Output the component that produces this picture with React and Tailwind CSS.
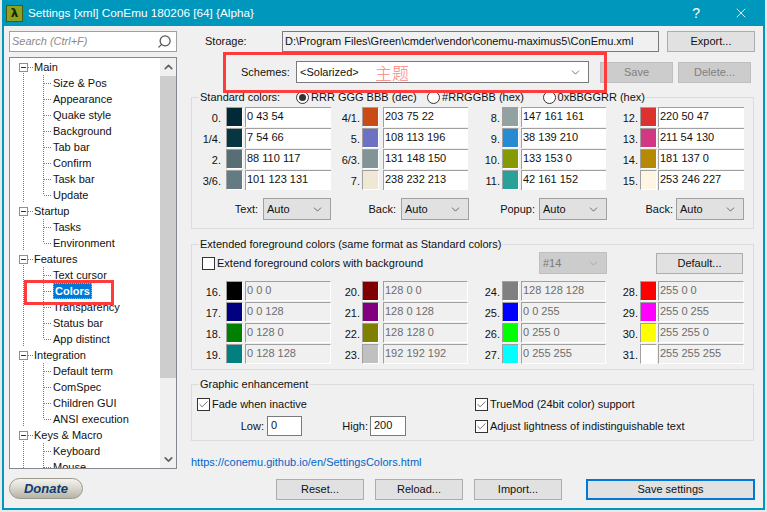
import React from "react";
import { ChevronDown, ChevronUp, Check, Search, X } from "lucide-react";

const TREE = [
  ["Main", 0, false], ["Size & Pos", 1, false], ["Appearance", 1, false], ["Quake style", 1, false],
  ["Background", 1, false], ["Tab bar", 1, false], ["Confirm", 1, false], ["Task bar", 1, false], ["Update", 1, true],
  ["Startup", 0, false], ["Tasks", 1, false], ["Environment", 1, true],
  ["Features", 0, false], ["Text cursor", 1, false], ["Colors", 1, false], ["Transparency", 1, false],
  ["Status bar", 1, false], ["App distinct", 1, true],
  ["Integration", 0, false], ["Default term", 1, false], ["ComSpec", 1, false], ["Children GUI", 1, false], ["ANSI execution", 1, true],
  ["Keys & Macro", 0, false], ["Keyboard", 1, false], ["Mouse", 1, false],
];

const STANDARD = [
  [
    ["0.", "#002b36", "0 43 54"], ["1/4.", "#073642", "7 54 66"],
    ["2.", "#586e75", "88 110 117"], ["3/6.", "#657b83", "101 123 131"],
  ],
  [
    ["4/1.", "#cb4b16", "203 75 22"], ["5.", "#6c71c4", "108 113 196"],
    ["6/3.", "#839496", "131 148 150"], ["7.", "#eee8d5", "238 232 213"],
  ],
  [
    ["8.", "#93a1a1", "147 161 161"], ["9.", "#268bd2", "38 139 210"],
    ["10.", "#859900", "133 153 0"], ["11.", "#2aa198", "42 161 152"],
  ],
  [
    ["12.", "#dc322f", "220 50 47"], ["13.", "#d33682", "211 54 130"],
    ["14.", "#b58900", "181 137 0"], ["15.", "#fdf6e3", "253 246 227"],
  ],
];

const EXTENDED = [
  [
    ["16.", "#000000", "0 0 0"], ["17.", "#000080", "0 0 128"],
    ["18.", "#008000", "0 128 0"], ["19.", "#008080", "0 128 128"],
  ],
  [
    ["20.", "#800000", "128 0 0"], ["21.", "#800080", "128 0 128"],
    ["22.", "#808000", "128 128 0"], ["23.", "#c0c0c0", "192 192 192"],
  ],
  [
    ["24.", "#808080", "128 128 128"], ["25.", "#0000ff", "0 0 255"],
    ["26.", "#00ff00", "0 255 0"], ["27.", "#00ffff", "0 255 255"],
  ],
  [
    ["28.", "#ff0000", "255 0 0"], ["29.", "#ff00ff", "255 0 255"],
    ["30.", "#ffff00", "255 255 0"], ["31.", "#ffffff", "255 255 255"],
  ],
];

// the four colour columns are not evenly spaced in the dialog
const COLUMNS = [
  { width: "w-[136px]", label: "w-[26px]", swatch: "ml-[5px]", field: "ml-[2px] w-[86px]" },
  { width: "w-[140px]", label: "w-[29px]", swatch: "ml-[2px]", field: "ml-[4px] w-[85px]" },
  { width: "w-[138px]", label: "w-[29px]", swatch: "ml-[2px]", field: "ml-[2px] w-[85px]" },
  { width: "w-[140px]", label: "w-[29px]", swatch: "ml-[2px]", field: "ml-[1px] w-[86px]" },
];

function TreeRow({ label, level, last, selected }) {
  return (
    <div className="flex h-4 shrink-0 items-center">
      <svg width={level ? 42 : 23} height="16" className="shrink-0">
        <line x1="13.5" y1={level ? 0 : 12} x2="13.5" y2="16" stroke="#777" strokeDasharray="1 1" />
        {level ? (
          <>
            <line x1="33.5" y1="0" x2="33.5" y2={last ? 8 : 16} stroke="#777" strokeDasharray="1 1" />
            <line x1="34" y1="8.5" x2="42" y2="8.5" stroke="#777" strokeDasharray="1 1" />
          </>
        ) : (
          <>
            <rect x="9.5" y="4.5" width="8" height="8" fill="#fff" stroke="#8e8f8f" />
            <line x1="11" y1="8.5" x2="16" y2="8.5" stroke="#333" />
            <line x1="18" y1="8.5" x2="23" y2="8.5" stroke="#777" strokeDasharray="1 1" />
          </>
        )}
      </svg>
      <span
        className={
          selected
            ? "ml-px border border-dotted border-[#f5a623] bg-[#0078d7] px-[1px] leading-[14px] font-bold text-white"
            : "ml-px whitespace-nowrap"
        }
      >
        {label}
      </span>
    </div>
  );
}

function Sidebar() {
  return (
    <div className="flex w-[168px] shrink-0 flex-col">
      <div className="flex h-[21px] items-center justify-between border border-[#a0a0a0] bg-white pr-1 pl-[2px]">
        <span className="text-[#8a8a8a] italic">Search (Ctrl+F)</span>
        <Search size={15} className="-scale-x-100 text-[#555]" />
      </div>
      <div className="mt-[5px] flex h-[412px] overflow-hidden border border-[#828790] bg-white">
        <div className="flex flex-1 flex-col overflow-hidden pt-[1px]">
          {TREE.map(([label, level, last]) => (
            <TreeRow key={label} label={label} level={level} last={last} selected={label === "Colors"} />
          ))}
        </div>
        <div className="flex w-[16px] flex-col items-center bg-[#f0f0f0]">
          <ChevronUp size={13} strokeWidth={3} className="my-[2px] h-[14px] text-[#606060]" />
          <div className="h-[302px] w-full bg-[#cdcdcd]" />
          <ChevronDown size={13} strokeWidth={3} className="mt-auto mb-[2px] text-[#606060]" />
        </div>
      </div>
      <div className="mt-[9px] flex h-[21px] w-[74px] items-center justify-center rounded-full border border-[#9c9a8c] bg-gradient-to-b from-[#f4f3ee] via-[#d8d6cc] to-[#b5b3a6] text-[13px] font-bold text-[#0f3a6e] italic">
        Donate
      </div>
    </div>
  );
}

function Button({ className = "", disabled, primary, children }) {
  let look = "border border-[#adadad] bg-[#e1e1e1]";
  if (disabled) look = "border border-[#bfbfbf] bg-[#cccccc] text-[#7f7f7f]";
  if (primary) look = "border-2 border-[#0078d7] bg-[#e1e1e1]";
  return (
    <div className={`flex h-[21px] shrink-0 items-center justify-center ${look} ${className}`}>
      {children}
    </div>
  );
}

function Combo({ className = "", disabled, children }) {
  return (
    <div
      className={`flex h-[22px] shrink-0 items-center justify-between border pr-[6px] pl-[3px] ${
        disabled ? "border-[#bfbfbf] bg-[#cccccc] text-[#7a7a7a]" : "border-[#a0a0a0] bg-[#e1e1e1]"
      } ${className}`}
    >
      <span>{children}</span>
      <ChevronDown size={13} strokeWidth={1.25} className={disabled ? "text-[#9a9a9a]" : "text-[#333]"} />
    </div>
  );
}

function Radio({ checked, className = "", children }) {
  return (
    <div className={`flex items-center gap-[2px] bg-[#f0f0f0] ${className}`}>
      <span className="flex h-[13px] w-[13px] items-center justify-center rounded-full border border-[#333] bg-white">
        {checked && <span className="h-[7px] w-[7px] rounded-full bg-[#333]" />}
      </span>
      <span className="whitespace-nowrap">{children}</span>
    </div>
  );
}

function CheckBox({ checked, className = "", children }) {
  return (
    <div className={`flex h-[14px] items-center gap-[2px] whitespace-nowrap ${className}`}>
      <span className="flex h-[13px] w-[13px] items-center justify-center border border-[#333] bg-white">
        {checked && <Check size={11} strokeWidth={1.5} className="text-[#333]" />}
      </span>
      <span>{children}</span>
    </div>
  );
}

function ColorColumn({ rows, column, disabled }) {
  return (
    <div className={`flex shrink-0 flex-col gap-px ${column.width}`}>
      {rows.map(([label, color, value]) => (
        <div key={label} className="flex h-[20px] items-center">
          <span className={`${column.label} shrink-0 pt-[3px] text-right`}>{label}</span>
          <span
            className={`${column.swatch} h-[20px] w-[17px] shrink-0 border border-t-[#a0a0a0] border-r-white border-b-white border-l-[#a0a0a0]`}
            style={{ backgroundColor: color }}
          />
          <span
            className={`${column.field} h-[20px] shrink-0 border-t border-l border-[#a0a0a0] pl-[1px] leading-[16px] ${
              disabled
                ? "border-r border-b border-r-white border-b-white bg-[#f0f0f0] text-[#6d6d6d]"
                : "bg-white"
            }`}
          >
            {value}
          </span>
        </div>
      ))}
    </div>
  );
}

function ComboLabel({ label, width, gap }) {
  return (
    <div className={`flex shrink-0 items-center justify-end ${width}`}>
      <span>{label}</span>
      <Combo className={`${gap} w-[68px]`}>Auto</Combo>
    </div>
  );
}

function Panel() {
  return (
    <div className="relative flex w-[563px] shrink-0 flex-col">
      <div className="flex h-[21px] items-center">
        <span className="ml-[14px] w-[77px] shrink-0">Storage:</span>
        <div className="flex h-[21px] w-[377px] shrink-0 items-center border border-[#7a7a7a] bg-[#f0f0f0] pl-[2px] whitespace-nowrap">
          D:\Program Files\Green\cmder\vendor\conemu-maximus5\ConEmu.xml
        </div>
        <Button className="ml-[8px] w-[88px]">Export...</Button>
      </div>

      <div className="mt-[9px] flex h-[22px] items-center">
        <span className="ml-[50px] w-[55px] shrink-0">Schemes:</span>
        <div className="flex h-[22px] w-[293px] shrink-0 items-center border border-[#7a7a7a] bg-white pr-[6px] pl-[3px]">
          <span className="w-[75px]">{"<Solarized>"}</span>
          <span className="font-['Noto_Sans_CJK_SC',sans-serif] text-[17px] leading-none font-light text-[#ff7f7f]">
            主题
          </span>
          <ChevronDown size={13} strokeWidth={1.25} className="ml-auto text-[#333]" />
        </div>
        <Button disabled className="ml-[11px] w-[73px]">Save</Button>
        <Button disabled className="ml-[5px] w-[73px]">Delete...</Button>
      </div>

      {/* red annotation over the schemes row */}
      <div className="pointer-events-none absolute top-[21px] left-[32px] h-[41px] w-[384px] border-[3px] border-[#ff3b3b]" />

      <fieldset className="mt-[7px] h-[139px] border border-[#dcdcdc]">
        <legend className="ml-[7px] flex h-[14px] w-[446px] items-center bg-[#f0f0f0] pl-px">
          <span className="w-[96px] shrink-0">Standard colors:</span>
          <Radio checked className="w-[134px]">RRR GGG BBB (dec)</Radio>
          <Radio className="w-[118px]">#RRGGBB (hex)</Radio>
          <Radio>0xBBGGRR (hex)</Radio>
        </legend>
        <div className="mt-[3px] flex pl-[3px]">
          {STANDARD.map((rows, i) => (
            <ColorColumn key={i} rows={rows} column={COLUMNS[i]} />
          ))}
        </div>
        <div className="mt-[8px] flex pl-[3px]">
          <ComboLabel label="Text:" width="w-[136px]" gap="ml-[5px]" />
          <ComboLabel label="Back:" width="w-[138px]" gap="ml-[5px]" />
          <ComboLabel label="Popup:" width="w-[138px]" gap="ml-[4px]" />
          <ComboLabel label="Back:" width="w-[137px]" gap="ml-[3px]" />
        </div>
      </fieldset>

      <fieldset className="mt-[8px] h-[133px] border border-[#dcdcdc]">
        <legend className="ml-[7px] h-[14px] bg-[#f0f0f0] px-px leading-[14px] whitespace-nowrap">
          Extended foreground colors (same format as Standard colors)
        </legend>
        <div className="mt-[1px] flex h-[22px] items-center">
          <CheckBox className="ml-[10px] w-[337px]">Extend foreground colors with background</CheckBox>
          <Combo disabled className="w-[68px]">#14</Combo>
          <Button className="ml-[49px] w-[87px]">Default...</Button>
        </div>
        <div className="mt-[7px] flex pl-[3px]">
          {EXTENDED.map((rows, i) => (
            <ColorColumn key={i} rows={rows} column={COLUMNS[i]} disabled />
          ))}
        </div>
      </fieldset>

      <fieldset className="mt-[7px] h-[64px] border border-[#dcdcdc]">
        <legend className="ml-[7px] h-[14px] bg-[#f0f0f0] px-px leading-[14px]">Graphic enhancement</legend>
        <div className="mt-[6px] flex">
          <div className="w-[283px] shrink-0">
            <CheckBox checked className="ml-[5px]">Fade when inactive</CheckBox>
            <div className="mt-[5px] flex h-[20px] items-center">
              <span className="w-[72px] text-right">Low:</span>
              <span className="ml-[3px] h-[20px] w-[35px] border border-[#7a7a7a] bg-white pl-[3px] leading-[16px]">0</span>
              <span className="w-[66px] text-right">High:</span>
              <span className="ml-[2px] h-[20px] w-[36px] border border-[#7a7a7a] bg-white pl-[3px] leading-[16px]">200</span>
            </div>
          </div>
          <div>
            <CheckBox checked>TrueMod (24bit color) support</CheckBox>
            <CheckBox checked className="mt-[8px]">Adjust lightness of indistinguishable text</CheckBox>
          </div>
        </div>
      </fieldset>

      <a className="mt-[14px] h-[14px] leading-[14px] text-[#0066cc]">https://conemu.github.io/en/SettingsColors.html</a>

      <div className="mt-[10px] flex">
        <Button className="ml-[85px] w-[88px]">Reset...</Button>
        <Button className="ml-[11px] w-[88px]">Reload...</Button>
        <Button className="ml-[11px] w-[88px]">Import...</Button>
        <Button primary className="ml-[24px] w-[169px]">Save settings</Button>
      </div>
    </div>
  );
}

export default function App() {
  return (
    <div className="h-[512px] w-[767px] overflow-hidden bg-[#e9e9e9] pl-[2px] font-['Liberation_Sans',sans-serif] text-[11px] text-[#111]">
      <div className="flex h-[510px] w-[763px] flex-col border-x-2 border-b-2 border-[#0097bd] bg-[#f0f0f0]">
        <div className="-mx-[2px] flex h-[26px] shrink-0 items-center bg-[#0097bd] text-white">
          <span className="ml-[4px] flex h-[17px] w-[17px] items-center justify-center border border-[#4a5a10] bg-[#8da21e] font-['DejaVu_Sans',sans-serif] text-[12px] leading-none font-bold text-[#1a1f08]">
            λ
          </span>
          <span className="ml-[5px] text-[11.75px] whitespace-nowrap">Settings [xml] ConEmu 180206 [64] {"{Alpha}"}</span>
          <span className="ml-auto text-[14px]">?</span>
          <X size={16} strokeWidth={1.25} className="mr-[16px] ml-[33px]" />
        </div>
        <div className="flex flex-1 pt-[5px] pl-[5px]">
          <Sidebar />
          <div className="ml-[14px]">
            <Panel />
          </div>
        </div>
        {/* red annotation around the selected tree item */}
        <div className="pointer-events-none absolute top-[280px] left-[24px] h-[25px] w-[90px] border-[3px] border-[#ff3b3b]" />
      </div>
    </div>
  );
}
